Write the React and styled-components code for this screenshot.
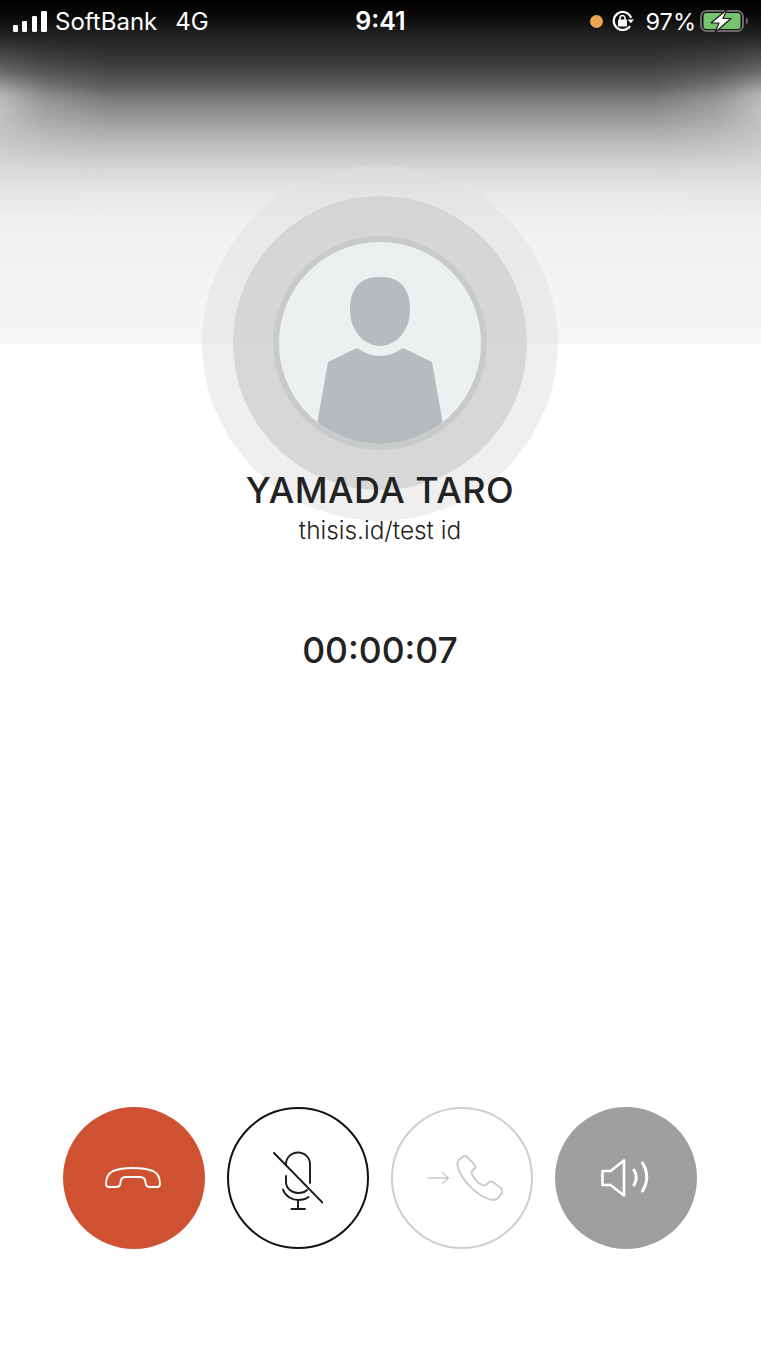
import React from "react";
import styled, { createGlobalStyle } from "styled-components";

const GlobalStyle = createGlobalStyle`
  html, body {
    margin: 0;
    padding: 0;
    background: #fff;
  }
  * {
    box-sizing: border-box;
  }
`;

const Page = styled.div`
  display: flex;
  flex-direction: column;
  align-items: center;
  height: 1350px;
  padding-right: 1px;
  overflow: hidden;
  font-family: Inter, "Noto Sans CJK JP", sans-serif;
  color: #222;
  background: #fff;
`;

const Header = styled.header`
  position: relative;
  align-self: stretch;
  height: 344px;
  margin-right: -1px;
  flex-shrink: 0;
  background: linear-gradient(
    180deg,
    #000 0,
    #0c0c0c 18px,
    #1e1e1e 32px,
    #383838 60px,
    #5a5a5a 85px,
    #7c7d7c 100px,
    #939493 115px,
    #a9aaa9 130px,
    #c2c3c2 150px,
    #d7d8d7 170px,
    #e5e6e5 190px,
    #eff0ef 220px,
    #f2f3f2 260px,
    #f5f6f5 344px
  );

  &::before,
  &::after {
    content: "";
    position: absolute;
    top: 35px;
    width: 110px;
    height: 180px;
    -webkit-mask-image: linear-gradient(180deg, transparent, rgba(0, 0, 0, 0.35) 20%, rgba(0, 0, 0, 0.95) 33%, #000 40%, transparent);
    mask-image: linear-gradient(180deg, transparent, rgba(0, 0, 0, 0.35) 20%, rgba(0, 0, 0, 0.95) 33%, #000 40%, transparent);
  }
  &::before {
    left: 0;
    background: linear-gradient(90deg, rgba(222, 223, 222, 0.64), rgba(222, 223, 222, 0.26) 40%, rgba(222, 223, 222, 0));
  }
  &::after {
    right: 0;
    background: linear-gradient(270deg, rgba(222, 223, 222, 0.64), rgba(222, 223, 222, 0.26) 40%, rgba(222, 223, 222, 0));
  }
`;

const StatusBar = styled.div`
  position: relative;
  z-index: 1;
  display: grid;
  grid-template-columns: 1fr auto 1fr;
  align-items: center;
  height: 42px;
  padding: 0 13px 0 13px;
  color: #fff;
  font-size: 24px;
`;

const StatusLeft = styled.div`
  display: flex;
  align-items: center;
`;

const Carrier = styled.span`
  margin-left: 8px;
`;

const Network = styled.span`
  margin-left: 18px;
`;

const Clock = styled.span`
  font-weight: 600;
  font-size: 25px;
`;

const StatusRight = styled.div`
  display: flex;
  align-items: center;
  justify-content: flex-end;
`;

const RecDot = styled.span`
  width: 13px;
  height: 13px;
  border-radius: 50%;
  background: #e8a552;
`;

const Percent = styled.span`
  margin: 0 4px 0 12px;
  font-size: 23.5px;
`;

const RotationIcon = styled.svg`
  margin-left: 9px;
`;

const OuterRing = styled.div`
  position: absolute;
  top: 165px;
  left: calc(50% - 178.5px);
  display: flex;
  align-items: center;
  justify-content: center;
  width: 356px;
  height: 356px;
  border-radius: 50%;
  background: rgba(224, 224, 224, 0.5);
`;

const MiddleRing = styled.div`
  display: flex;
  align-items: center;
  justify-content: center;
  width: 294px;
  height: 294px;
  border-radius: 50%;
  background: rgba(205, 205, 205, 0.7);
`;

const Avatar = styled.div`
  width: 214px;
  height: 214px;
  border: 6px solid #c9caca;
  border-radius: 50%;
  overflow: hidden;
  background: #ecf0f1;

  svg {
    display: block;
  }
`;

const Name = styled.h1`
  position: relative;
  margin: 125px 0 0;
  font-size: 36px;
  font-weight: 500;
  line-height: 42px;
  letter-spacing: 0.5px;
`;

const Handle = styled.p`
  position: relative;
  margin: 5px 0 0;
  font-size: 24.4px;
  font-weight: 300;
  line-height: 28px;
`;

const Timer = styled.div`
  margin-top: 86px;
  font-size: 35.5px;
  font-weight: 500;
  line-height: 42px;
`;

const Controls = styled.div`
  display: flex;
  gap: 22px;
  margin-top: auto;
  margin-bottom: 101px;
`;

const RoundButton = styled.button`
  display: flex;
  align-items: center;
  justify-content: center;
  width: 142px;
  height: 142px;
  padding: 0;
  border-radius: 50%;
  border: ${(props) => (props.$line ? `2px solid ${props.$line}` : "none")};
  background: ${(props) => props.$fill || "#fff"};
`;

const SignalIcon = () => (
  <svg width="34" height="21" viewBox="0 0 34 21" fill="#fff">
    <rect x="0" y="14" width="5" height="7" rx="1.2" />
    <rect x="9" y="10" width="5" height="11" rx="1.2" />
    <rect x="19" y="5" width="5" height="16" rx="1.2" />
    <rect x="28" y="0" width="6" height="21" rx="1.2" />
  </svg>
);

const RotationLockIcon = () => (
  <RotationIcon width="22" height="22" viewBox="0 0 22 22" fill="none">
    <path d="M17.6 16.8A9 9 0 1 1 18.8 7" stroke="#fff" strokeWidth="2.2" strokeLinecap="round" />
    <path d="M15.5 9.5h6.5l-3.2 3.8z" fill="#fff" />
    <rect x="6" y="9.5" width="9" height="7" rx="1" fill="#fff" />
    <path d="M8 10V8a2.5 2.5 0 0 1 5 0v2" stroke="#fff" strokeWidth="1.5" />
  </RotationIcon>
);

const BatteryIcon = () => (
  <svg width="48" height="24" viewBox="0 0 48 24" fill="none">
    <rect x="1" y="2" width="42" height="20" rx="5.5" stroke="#6a6a6a" strokeWidth="2" />
    <rect x="3.5" y="4" width="37" height="16" rx="3" fill="#76c46e" />
    <path d="M46 8.5c1.4.6 2 1.8 2 3.5s-.6 2.9-2 3.5z" fill="#6a6a6a" />
    <path
      d="M27 0.5 L11 14 H19 L15 23.5 L31 9.5 H23 Z"
      fill="#fff"
      stroke="#1c1c1c"
      strokeWidth="1.2"
      strokeLinejoin="round"
    />
  </svg>
);

const PersonIcon = () => (
  <svg width="202" height="202" viewBox="0 0 202 202" fill="#b6bbbd">
    <path d="M101 35C85 35 71 42 71 68C71 90 86 104 101 104C116 104 131 90 131 68C131 42 117 35 101 35Z" />
    <path d="M49 120L78 106Q101 122 124 106L153 120L164 182V202H38V182Z" />
  </svg>
);

const HangUpIcon = () => (
  <svg width="59" height="25" viewBox="0 0 59 25" fill="none">
    <path
      d="M1 18C1 10 4 7 8 5C18 1 38 1 48 5C52 7 55 10 55 18Q55 21 52 21H45Q42 21 41 19L40 14Q39 11 35 11H21Q17 11 16 14L15 19Q14 21 11 21H4Q1 21 1 18Z"
      stroke="#fff"
      strokeWidth="1.9"
    />
  </svg>
);

const MicOffIcon = () => (
  <svg width="50" height="64" viewBox="0 -6 50 64" fill="none" stroke="#1a1a1a" strokeWidth="1.9" strokeLinecap="round">
    <path d="M13 11.5V12.5M13 12A12 11.5 0 0 1 37 12V31" />
    <path d="M13 24V30A12 11 0 0 0 25 41C29 41 32 40 34 38" />
    <path d="M10 37.5C12 44 19 48 25 48C29 48 33 47 35.5 45" />
    <path d="M25 48V57M18.5 57H32" />
    <path d="M1 1L49.5 50.5" />
  </svg>
);

const TransferIcon = () => (
  <svg width="81" height="46" viewBox="-5.5 0 81 46" fill="none" stroke="#c9caca" strokeLinejoin="round">
    <path d="M0 23H21M14.5 17L21 23L14.5 29" strokeWidth="1.5" />
    <path
      transform="translate(29.5 0)"
      d="M2 5L6 1.5Q8 0 10 2L17 9Q19 11 18 13L15 16Q14 18 16 21C18 25 21 28 25 30Q27 31 29 30L32 27Q34 26 36 27L44 33Q46 35 45 38L41 43Q39 45 36 45C22 43 3 25 0.5 10Q0 7 2 5Z"
      strokeWidth="1.9"
    />
  </svg>
);

const SpeakerIcon = () => (
  <svg width="50" height="38" viewBox="0 0 50 38" fill="none" stroke="#fff" strokeLinecap="round" strokeLinejoin="round">
    <path d="M1.5 12H9.5L23 1.5V36.5L9.5 26H1.5Z" strokeWidth="2.6" />
    <path d="M33 11Q37.5 18.5 33 26" strokeWidth="3" />
    <path d="M41.5 4Q50 18 41.5 32" strokeWidth="3" />
  </svg>
);

const App = () => {
  return (
    <Page>
      <GlobalStyle />
      <Header>
        <StatusBar>
          <StatusLeft>
            <SignalIcon />
            <Carrier>SoftBank</Carrier>
            <Network>4G</Network>
          </StatusLeft>
          <Clock>9:41</Clock>
          <StatusRight>
            <RecDot />
            <RotationLockIcon />
            <Percent>97%</Percent>
            <BatteryIcon />
          </StatusRight>
        </StatusBar>
        <OuterRing>
          <MiddleRing>
            <Avatar>
              <PersonIcon />
            </Avatar>
          </MiddleRing>
        </OuterRing>
      </Header>
      <Name>YAMADA TARO</Name>
      <Handle>thisis.id/test id</Handle>
      <Timer>00:00:07</Timer>
      <Controls>
        <RoundButton $fill="#ce5231" aria-label="End call">
          <HangUpIcon />
        </RoundButton>
        <RoundButton $line="#111" aria-label="Mute">
          <MicOffIcon />
        </RoundButton>
        <RoundButton $line="#cfcfcf" aria-label="Transfer">
          <TransferIcon />
        </RoundButton>
        <RoundButton $fill="#9f9f9f" aria-label="Speaker">
          <SpeakerIcon />
        </RoundButton>
      </Controls>
    </Page>
  );
};

export default App;
